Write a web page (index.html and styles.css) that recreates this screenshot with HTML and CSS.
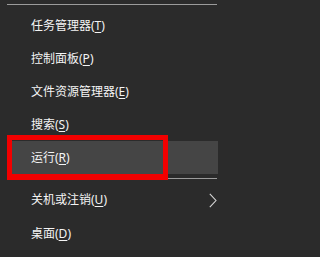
FILE: index.html
```html
<!DOCTYPE html>
<html lang="zh-CN">
<head>
<meta charset="utf-8">
<link rel="stylesheet" href="styles.css">
</head>
<body>
<div class="menu">
  <div class="sep sep-top"></div>
  <div class="group">
    <div class="item"><span>任务管理器(<u>T</u>)</span></div>
    <div class="item"><span>控制面板(<u>P</u>)</span></div>
    <div class="item"><span>文件资源管理器(<u>E</u>)</span></div>
    <div class="item"><span>搜索(<u>S</u>)</span></div>
    <div class="item active"><span>运行(<u>R</u>)</span><div class="mark"></div></div>
  </div>
  <div class="sep sep-mid"></div>
  <div class="group group2">
    <div class="item tall"><span>关机或注销(<u>U</u>)</span>
      <svg class="chev" width="8" height="15" viewBox="0 0 8 15"><polyline points="0.8,0.8 7,7.5 0.8,14.2" fill="none" stroke="#d6d6d6" stroke-width="1.1"/></svg>
    </div>
    <div class="item tall"><span>桌面(<u>D</u>)</span></div>
  </div>
</div>
</body>
</html>
```

FILE: styles.css
```css
html, body {
  margin: 0;
  padding: 0;
}
body {
  width: 220px;
  height: 257px;
  overflow: hidden;
  background: #2b2b2b;
  font-family: "Noto Sans", "Noto Sans CJK SC", sans-serif;
  font-size: 12px;
  color: #f4f4f4;
}
.menu {
  padding: 4px 2px 0 7px;
}
.sep {
  height: 1px;
  background: #9b9b9b;
}
.sep-top {
  margin-right: 1px;
}
.sep-mid {
  margin-top: 4px;
  margin-right: 1px;
}
.group {
  margin-top: 4px;
}
.item {
  position: relative;
  height: 33px;
  display: flex;
  align-items: center;
  padding-left: 24px;
  line-height: 1;
}
.item.tall {
  height: 34px;
}
.item u {
  text-decoration-thickness: 1px;
  text-underline-offset: 2px;
}
.active {
  background: #454545;
}
.mark {
  position: absolute;
  left: 0;
  top: -6px;
  width: 161px;
  height: 45px;
  box-sizing: border-box;
  border: 5px solid #f20000;
  border-bottom-width: 6px;
}
.chev {
  margin-left: auto;
  margin-right: 1px;
}
```
